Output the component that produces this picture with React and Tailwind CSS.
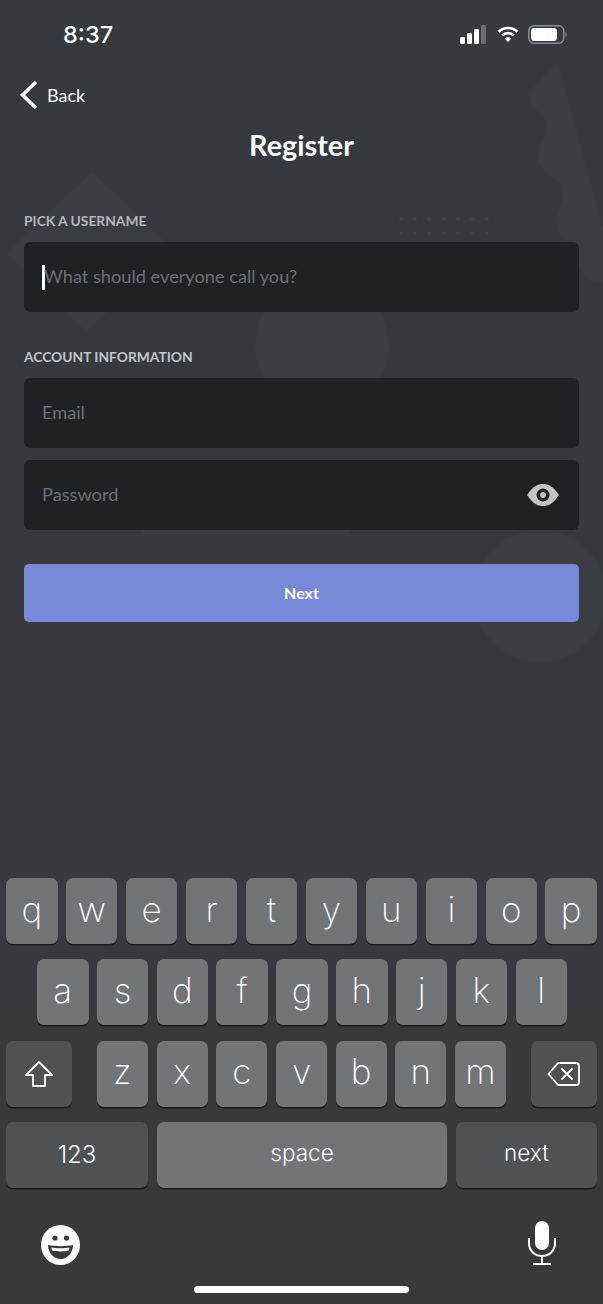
const FONT_UI = { fontFamily: '"Lato", "Noto Sans", sans-serif' };

function Key({ label, dark, className = 'w-[51.5px]', children }) {
  return (
    <div
      className={`flex h-[66px] items-center justify-center rounded-[7px] shadow-[0_1.5px_0_#18191b] text-white ${
        dark ? 'bg-[#505153]' : 'bg-[#737476]'
      } ${className}`}
    >
      {label ? <span className="pb-1 font-['Inter',sans-serif] text-[35px] font-[250] leading-none">{label}</span> : children}
    </div>
  );
}

function Field({ placeholder, caret, icon }) {
  return (
    <div className="flex h-[70px] items-center rounded-[6px] bg-[#202125] pl-[18px] pr-5 text-[18.2px] text-[#6e7074]" style={FONT_UI}>
      {caret && <span className="h-[25px] w-[3px] bg-white" />}
      <span className={caret ? '-ml-[1px] flex-1' : 'flex-1'}>{placeholder}</span>
      {icon}
    </div>
  );
}

export default function App() {
  return (
    <div className="relative flex h-[1304px] w-[603px] flex-col overflow-hidden bg-[#36393e]">
      <svg className="absolute left-0 top-0" width="603" height="680" viewBox="0 0 603 680" fill="#3b3c41">
        <path d="M92 172 L172 248 L87 332 L6 253 Z" />
        <circle cx="322" cy="345" r="67" />
        <circle cx="540" cy="596" r="66" />
        <rect x="142" y="529" width="207" height="6" />
        <path d="M558 63 C548 72 530 85 530 98 C530 112 546 110 546 124 C546 136 538 146 538 157 C538 176 563 174 563 194 C563 206 556 210 556 222 C556 236 566 240 572 246 C578 270 585 282 603 282 L603 227 Z" />
        <g fill="#3e4045">
          {[219, 233].map((y) =>
            [401, 415, 429, 444, 458, 472, 487].map((x) => <circle key={`${x}-${y}`} cx={x} cy={y} r="2" />)
          )}
        </g>
      </svg>

      <div className="relative flex flex-col">
        <div className="flex h-[68px] items-center pl-[63px] pr-[36px] pt-[1px] text-white">
          <span className="font-['Inter',sans-serif] text-[23.5px] font-medium leading-none">8:37</span>
          <div className="ml-auto flex items-center gap-[8px]">
            <svg width="28" height="19" viewBox="0 0 28 19">
              <rect x="0" y="12" width="5" height="7" rx="1.2" fill="#fff" />
              <rect x="7" y="8" width="5" height="11" rx="1.2" fill="#fff" />
              <rect x="14" y="4" width="5" height="15" rx="1.2" fill="#fff" />
              <rect x="21" y="0" width="5" height="19" rx="1.2" fill="#6b6d70" />
            </svg>
            <svg width="24" height="17" viewBox="0 0 24 19" fill="none" stroke="#fff" strokeWidth="3">
              <path d="M1.5 6.5 C7.5 0.8 16.5 0.8 22.5 6.5" />
              <path d="M5.5 10.5 C9 7.2 15 7.2 18.5 10.5" />
              <path d="M12 18 L8.2 14 C10.2 12.2 13.8 12.2 15.8 14 Z" fill="#fff" stroke="none" />
            </svg>
            <svg width="39" height="19" viewBox="0 0 39 19">
              <rect x="0.75" y="0.75" width="35" height="17.5" rx="5" fill="none" stroke="#8b8c8f" strokeWidth="1.5" />
              <rect x="3" y="3" width="26" height="13" rx="3" fill="#fff" />
              <path d="M37.5 7 C39 7.6 39 11.4 37.5 12 Z" fill="#8b8c8f" />
            </svg>
          </div>
        </div>

        <div className="flex h-[54px] items-center pl-[19px]" style={FONT_UI}>
          <svg width="20" height="30" viewBox="0 0 20 30" fill="none" stroke="#fff" strokeWidth="3.6">
            <path d="M17 2 L3.5 15 L17 28" />
          </svg>
          <span className="ml-[8px] text-[18px] leading-none text-white">Back</span>
        </div>

        <h1 className="mt-[1px] text-center text-[28.8px] font-bold leading-[44px] text-white" style={FONT_UI}>Register</h1>

        <div className="mt-[45px] flex flex-col px-6">
          <h2 className="text-[13.8px] font-bold leading-[18px] text-[#b4b5b8]" style={FONT_UI}>PICK A USERNAME</h2>
          <div className="mt-3">
            <Field placeholder="What should everyone call you?" caret />
          </div>
          <h2 className="mt-9 text-[13.8px] font-bold leading-[18px] text-[#c4c5c8]" style={FONT_UI}>ACCOUNT INFORMATION</h2>
          <div className="mt-3 flex flex-col gap-3">
            <Field placeholder="Email" />
            <Field
              placeholder="Password"
              icon={
                <svg width="32" height="22" viewBox="0 0 32 22">
                  <path d="M0 11 C6 2 11 0 16 0 C21 0 26 2 32 11 C26 20 21 22 16 22 C11 22 6 20 0 11 Z" fill="#c2c3c5" />
                  <circle cx="16" cy="11" r="6.5" fill="#202125" />
                  <circle cx="16" cy="11" r="3" fill="#c2c3c5" />
                </svg>
              }
            />
          </div>
          <button className="mt-[34px] h-[58px] rounded-[5px] bg-[#7789d6] text-[16px] font-bold text-white" style={FONT_UI}>Next</button>
        </div>
      </div>

      <div className="relative mt-auto flex h-[426px] flex-col bg-gradient-to-b from-[#36393e] to-[#39393b] font-['Inter',sans-serif]">
        <div className="flex flex-col gap-[15.3px]">
          <div className="flex justify-between px-[6px]">
            {['q', 'w', 'e', 'r', 't', 'y', 'u', 'i', 'o', 'p'].map((k) => <Key key={k} label={k} />)}
          </div>
          <div className="flex justify-between pl-[37px] pr-[36px]">
            {['a', 's', 'd', 'f', 'g', 'h', 'j', 'k', 'l'].map((k) => <Key key={k} label={k} />)}
          </div>
          <div className="flex justify-between px-[6px]">
            <Key dark className="w-[66px]">
              <svg width="30" height="28" viewBox="0 0 30 28" fill="none" stroke="#fff" strokeWidth="1.8" strokeLinejoin="round">
                <path d="M15 2 L28 15 L21 15 L21 26 L9 26 L9 15 L2 15 Z" />
              </svg>
            </Key>
            <div className="flex gap-[8.7px]">
              {['z', 'x', 'c', 'v', 'b', 'n', 'm'].map((k) => <Key key={k} label={k} className="w-[51px]" />)}
            </div>
            <Key dark className="w-[66px]">
              <svg width="34" height="26" viewBox="0 0 34 26" fill="none" stroke="#fff" strokeWidth="1.8" strokeLinejoin="round">
                <path d="M11 2 L29 2 C31 2 32 3 32 5 L32 21 C32 23 31 24 29 24 L11 24 L1.5 13 Z" />
                <path d="M15 8 L25 18 M25 8 L15 18" strokeLinecap="round" />
              </svg>
            </Key>
          </div>
          <div className="flex gap-[9px] px-[6px]">
            <Key dark className="w-[142px]"><span className="text-[24px] font-light leading-none">123</span></Key>
            <Key className="flex-1"><span className="pb-1 text-[22.5px] font-light leading-none">space</span></Key>
            <Key dark className="w-[141px]"><span className="pb-1 text-[22.5px] font-light leading-none">next</span></Key>
          </div>
        </div>

        <div className="mt-[33px] flex items-center justify-between pl-[41px] pr-[46px]">
          <svg width="39" height="40" viewBox="0 0 39 40" className="mt-[4px]">
            <ellipse cx="19.5" cy="20" rx="19.5" ry="20" fill="#fff" />
            <circle cx="14" cy="13" r="2.6" fill="#39393c" />
            <circle cx="25.5" cy="13" r="2.6" fill="#39393c" />
            <path d="M7 20 C14 21.5 25 21.5 32 20 C32 28 26 34 19.5 34 C13 34 7 28 7 20 Z" fill="#39393c" />
            <path d="M10.5 22.5 C15 23.5 24 23.5 28.5 22.5 L28 25.5 C23 26.7 16 26.7 11 25.5 Z" fill="#fff" />
          </svg>
          <svg width="30" height="44" viewBox="0 0 30 44" fill="none" stroke="#fff" strokeWidth="2">
            <rect x="8" y="0" width="14" height="29" rx="7" fill="#fff" stroke="none" />
            <path d="M2 17 L2 22 C2 30 8 35 15 35 C22 35 28 30 28 22 L28 17" />
            <path d="M15 35 L15 42 M6 43 L24 43" />
          </svg>
        </div>

        <div className="absolute bottom-[11px] left-[194px] h-[7px] w-[215px] rounded-full bg-white" />
      </div>
    </div>
  );
}
